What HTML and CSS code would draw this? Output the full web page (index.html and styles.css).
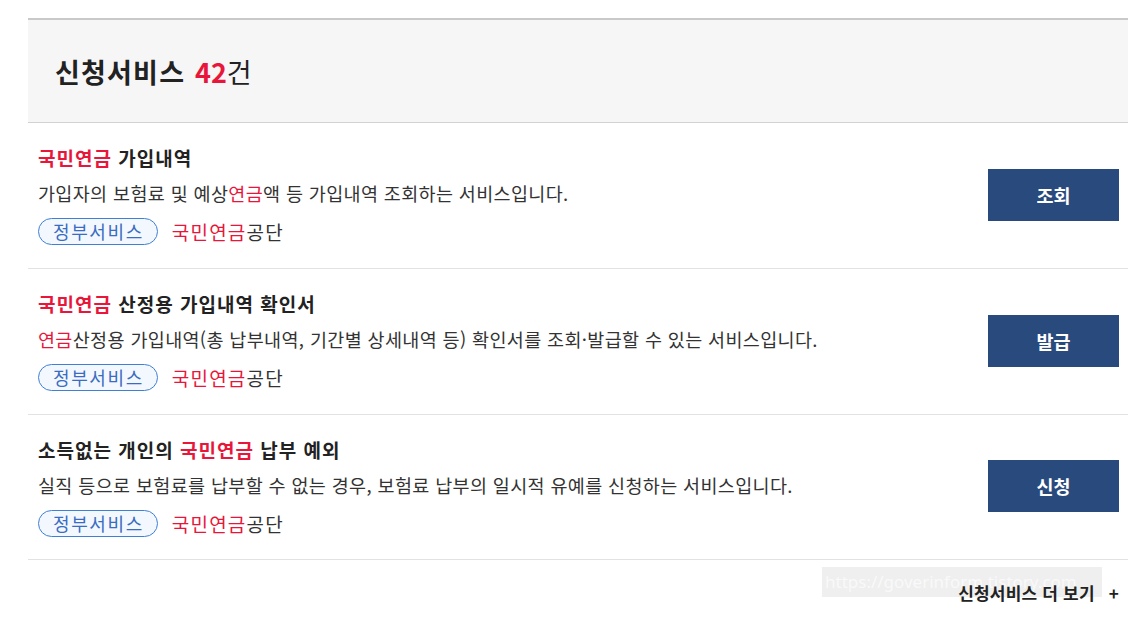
FILE: index.html
```html
<!DOCTYPE html>
<html lang="ko">
<head>
<meta charset="utf-8">
<link rel="stylesheet" href="styles.css">
</head>
<body>
<div class="wrap">
  <div class="head">
    <h2 class="head-title">신청서비스 <span class="count"><b>42</b>건</span></h2>
  </div>
  <ul class="list">
    <li class="item">
      <div class="info">
        <p class="title"><em>국민연금</em> 가입내역</p>
        <p class="desc">가입자의 보험료 및 예상<em>연금</em>액 등 가입내역 조회하는 서비스입니다.</p>
        <div class="meta"><span class="tag">정부서비스</span><span class="org"><em>국민연금</em>공단</span></div>
      </div>
      <a class="btn">조회</a>
    </li>
    <li class="item">
      <div class="info">
        <p class="title"><em>국민연금</em> 산정용 가입내역 확인서</p>
        <p class="desc"><em>연금</em>산정용 가입내역(총 납부내역, 기간별 상세내역 등) 확인서를 조회·발급할 수 있는 서비스입니다.</p>
        <div class="meta"><span class="tag">정부서비스</span><span class="org"><em>국민연금</em>공단</span></div>
      </div>
      <a class="btn">발급</a>
    </li>
    <li class="item">
      <div class="info">
        <p class="title">소득없는 개인의 <em>국민연금</em> 납부 예외</p>
        <p class="desc">실직 등으로 보험료를 납부할 수 없는 경우, 보험료 납부의 일시적 유예를 신청하는 서비스입니다.</p>
        <div class="meta"><span class="tag">정부서비스</span><span class="org"><em>국민연금</em>공단</span></div>
      </div>
      <a class="btn">신청</a>
    </li>
  </ul>
  <div class="more">
    <div class="watermark">https://goverinform.tistory.com</div>
    <a class="more-link">신청서비스 더 보기 <span class="plus">+</span></a>
  </div>
</div>
</body>
</html>
```

FILE: styles.css
```css
* { box-sizing: border-box; }
html, body { margin: 0; padding: 0; background: #fff; }
body {
  font-family: "Noto Sans CJK KR", "Noto Sans", sans-serif;
  color: #333;
}
.wrap {
  width: 1100px;
  margin: 18px 0 0 28px;
}
.head {
  border-top: 2px solid #c9c9c9;
  border-bottom: 1px solid #d2d2d2;
  background: #f6f6f6;
  height: 105px;
  padding: 0 0 0 27px;
  display: flex;
  align-items: center;
}
.head-title {
  margin: 0;
  font-size: 27px;
  font-weight: 700;
  color: #222;
  line-height: 1;
  letter-spacing: 1.2px;
}
.count { margin-left: 1px; font-weight: 400; letter-spacing: 0; }
.count b { color: #e8163a; font-weight: 700; }
.list { list-style: none; margin: 0; padding: 0; }
.item {
  display: flex;
  align-items: center;
  justify-content: space-between;
  height: 146px;
  border-bottom: 1px solid #e2e2e2;
  padding: 0 9px 0 10px;
}
.item:last-child { height: 145px; }
.info { display: flex; flex-direction: column; }
em { font-style: normal; color: #e8163a; }
.title {
  margin: 0;
  font-size: 19px;
  font-weight: 700;
  color: #222;
  line-height: 24px;
  letter-spacing: 1px;
}
.desc {
  margin: 11px 0 0;
  font-size: 18.5px;
  color: #333;
  line-height: 24px;
  letter-spacing: 0.35px;
}
.meta {
  margin-top: 13px;
  display: flex;
  align-items: center;
}
.tag {
  display: inline-block;
  height: 27px;
  line-height: 25px;
  padding: 0 13px 0 14px;
  border: 1px solid #3f7fd6;
  border-radius: 14px;
  background: #f3f8ff;
  color: #3a6cc0;
  font-size: 18px;
  letter-spacing: 1.6px;
}
.org {
  margin-left: 14px;
  font-size: 19px;
  color: #333;
  letter-spacing: 1.2px;
}
.btn {
  display: flex;
  align-items: center;
  justify-content: center;
  width: 131px;
  height: 52px;
  margin-top: -2px;
  background: #284a7d;
  color: #fff;
  font-size: 18.5px;
  font-weight: 700;
}
.more {
  position: relative;
  display: flex;
  justify-content: flex-end;
  padding: 21px 9px 0 0;
}
.more-link {
  font-size: 17px;
  font-weight: 700;
  color: #222;
  line-height: 24px;
  letter-spacing: 0.2px;
  position: relative;
}
.plus { margin-left: 9px; font-weight: 700; }
.watermark {
  position: absolute;
  left: 794px;
  top: 7px;
  width: 280px;
  height: 30px;
  background: #efefef;
  color: #f9f9f9;
  font-size: 17px;
  line-height: 30px;
  font-family: "Noto Sans", sans-serif;
  overflow: hidden;
  white-space: nowrap;
  padding-left: 3px;
}
```
